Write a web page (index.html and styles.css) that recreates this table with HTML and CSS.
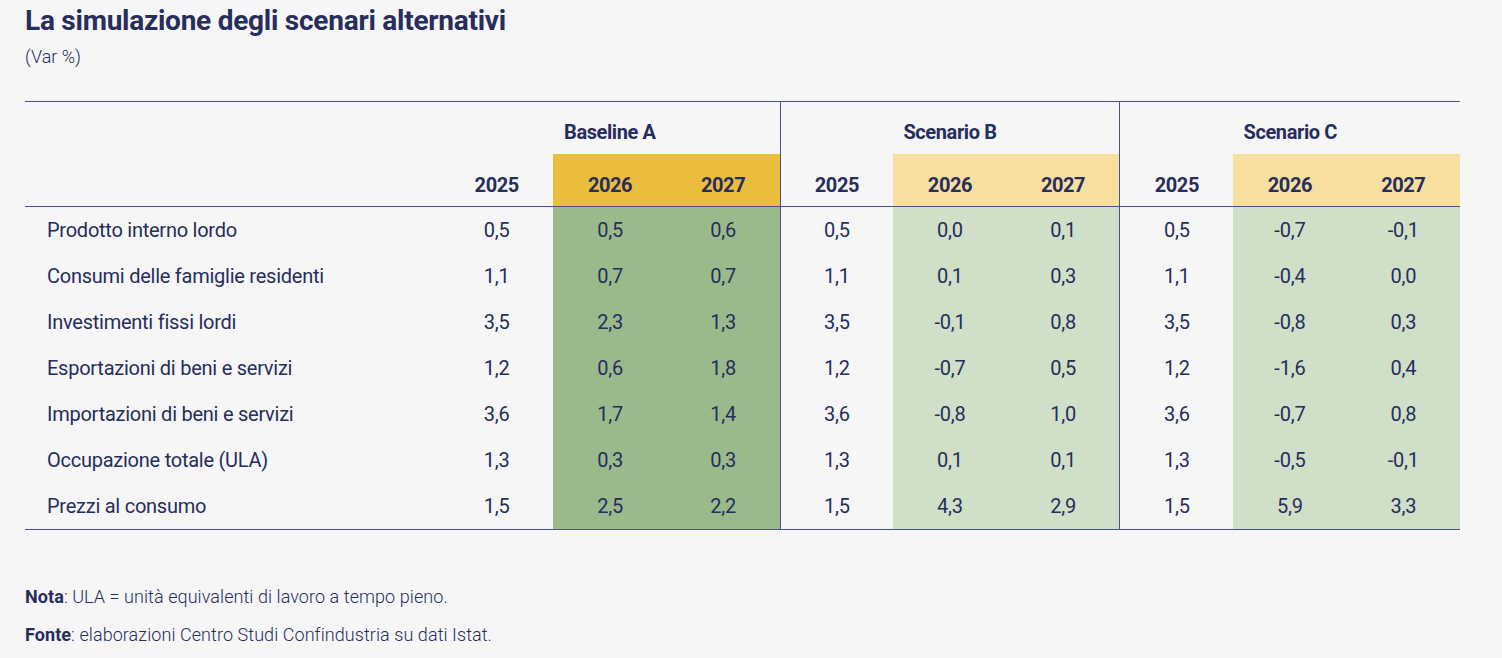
FILE: index.html
```html
<!DOCTYPE html>
<html lang="it">
<head>
<meta charset="utf-8">
<title>La simulazione degli scenari alternativi</title>
<link rel="stylesheet" href="styles.css">
</head>
<body>
<div class="page">
  <h1 class="title">La simulazione degli scenari alternativi</h1>
  <p class="subtitle">(Var %)</p>
  <table class="data">
    <colgroup>
      <col class="c-label">
      <col class="c-num"><col class="c-num"><col class="c-num">
      <col class="c-num"><col class="c-num"><col class="c-num">
      <col class="c-num"><col class="c-num"><col class="c-num">
    </colgroup>
    <thead>
      <tr class="groups">
        <th></th>
        <th colspan="3">Baseline A</th>
        <th colspan="3" class="div">Scenario B</th>
        <th colspan="3" class="div">Scenario C</th>
      </tr>
      <tr class="years">
        <th></th>
        <th>2025</th><th class="y-dark">2026</th><th class="y-dark">2027</th>
        <th class="div">2025</th><th class="y-light">2026</th><th class="y-light">2027</th>
        <th class="div">2025</th><th class="y-light">2026</th><th class="y-light">2027</th>
      </tr>
    </thead>
    <tbody>
      <tr><td class="lbl">Prodotto interno lordo</td><td>0,5</td><td class="g-dark">0,5</td><td class="g-dark">0,6</td><td class="div">0,5</td><td class="g-light">0,0</td><td class="g-light">0,1</td><td class="div">0,5</td><td class="g-light">-0,7</td><td class="g-light">-0,1</td></tr>
      <tr><td class="lbl">Consumi delle famiglie residenti</td><td>1,1</td><td class="g-dark">0,7</td><td class="g-dark">0,7</td><td class="div">1,1</td><td class="g-light">0,1</td><td class="g-light">0,3</td><td class="div">1,1</td><td class="g-light">-0,4</td><td class="g-light">0,0</td></tr>
      <tr><td class="lbl">Investimenti fissi lordi</td><td>3,5</td><td class="g-dark">2,3</td><td class="g-dark">1,3</td><td class="div">3,5</td><td class="g-light">-0,1</td><td class="g-light">0,8</td><td class="div">3,5</td><td class="g-light">-0,8</td><td class="g-light">0,3</td></tr>
      <tr><td class="lbl">Esportazioni di beni e servizi</td><td>1,2</td><td class="g-dark">0,6</td><td class="g-dark">1,8</td><td class="div">1,2</td><td class="g-light">-0,7</td><td class="g-light">0,5</td><td class="div">1,2</td><td class="g-light">-1,6</td><td class="g-light">0,4</td></tr>
      <tr><td class="lbl">Importazioni di beni e servizi</td><td>3,6</td><td class="g-dark">1,7</td><td class="g-dark">1,4</td><td class="div">3,6</td><td class="g-light">-0,8</td><td class="g-light">1,0</td><td class="div">3,6</td><td class="g-light">-0,7</td><td class="g-light">0,8</td></tr>
      <tr><td class="lbl">Occupazione totale (ULA)</td><td>1,3</td><td class="g-dark">0,3</td><td class="g-dark">0,3</td><td class="div">1,3</td><td class="g-light">0,1</td><td class="g-light">0,1</td><td class="div">1,3</td><td class="g-light">-0,5</td><td class="g-light">-0,1</td></tr>
      <tr><td class="lbl">Prezzi al consumo</td><td>1,5</td><td class="g-dark">2,5</td><td class="g-dark">2,2</td><td class="div">1,5</td><td class="g-light">4,3</td><td class="g-light">2,9</td><td class="div">1,5</td><td class="g-light">5,9</td><td class="g-light">3,3</td></tr>
    </tbody>
  </table>
  <div class="notes">
    <p class="note"><b>Nota</b>: ULA = unità equivalenti di lavoro a tempo pieno.</p>
    <p class="note"><b>Fonte</b>: elaborazioni Centro Studi Confindustria su dati Istat.</p>
  </div>
</div>
</body>
</html>
```
FILE: styles.css
```css
html, body {
  margin: 0;
  padding: 0;
  background: #f6f6f6;
}
body {
  font-family: Roboto, "Liberation Sans", sans-serif;
  color: #272d5c;
}
.page {
  padding: 5px 0 0 25px;
}
.title {
  margin: 0;
  font-size: 28px;
  line-height: 32px;
  font-weight: 700;
  letter-spacing: -0.25px;
  white-space: nowrap;
}
.subtitle {
  margin: 9px 0 0 0;
  font-size: 18px;
  line-height: 22px;
  font-weight: 300;
  letter-spacing: 0;
}
.data {
  margin-top: 33px;
  width: 1435px;
  border-collapse: collapse;
  table-layout: fixed;
  border-top: 1.5px solid #4b5180;
  border-bottom: 1.5px solid #4b5180;
}
.c-label { width: 415px; }
.c-num { width: 113.3px; }
.data th, .data td {
  padding: 0;
  text-align: center;
  vertical-align: middle;
  font-size: 20px;
}
.data th {
  font-weight: 700;
  letter-spacing: -0.4px;
}
.groups th { height: 45px; padding-top: 7px; }
.years th { height: 43px; padding-top: 9px; }
.years { border-bottom: 1.5px solid #4b5180; }
.data td {
  height: 46px;
  font-weight: 400;
  letter-spacing: -0.2px;
}
.data td.lbl {
  text-align: left;
  padding-left: 22px;
  letter-spacing: -0.25px;
}
.div { border-left: 1.5px solid #4b5180; }
.y-dark { background: #eabd3c; }
.y-light { background: #f6df9f; }
.g-dark { background: #9aba8c; }
.g-light { background: #d0dfc7; }
.notes {
  margin-top: 56px;
}
.note {
  margin: 0 0 16px 0;
  font-size: 18px;
  line-height: 22px;
  font-weight: 300;
  letter-spacing: 0.07px;
}
.note b { font-weight: 700; }
```
